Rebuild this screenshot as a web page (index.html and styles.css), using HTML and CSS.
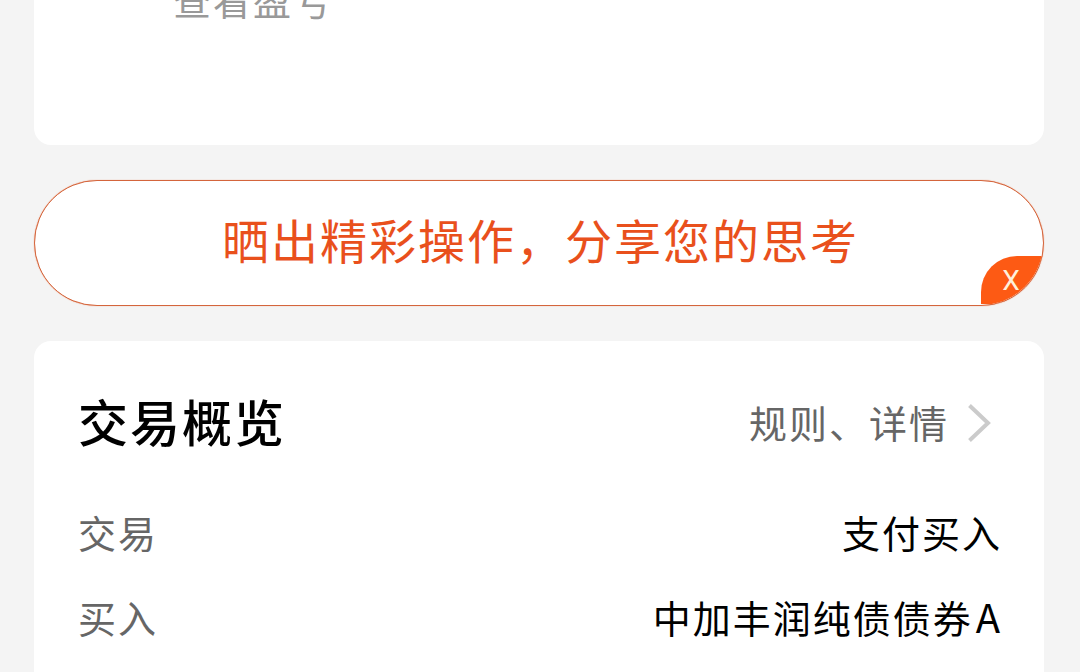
FILE: index.html
```html
<!DOCTYPE html>
<html lang="zh-CN">
<head>
    <meta charset="UTF-8">
    <meta name="viewport" content="width=device-width, initial-scale=1.0">
    <title>交易概览</title>
    <link rel="stylesheet" href="styles.css">
</head>
<body>
    <main class="page">
        <section class="card profit">
            <p class="profit-text">查看盈亏</p>
        </section>

        <section class="banner">
            <span class="banner-text">晒出精彩操作，分享您的思考</span>
            <button class="banner-close">
                <span>X</span>
            </button>
        </section>

        <section class="card overview">
            <header class="overview-head">
                <h2>交易概览</h2>
                <a class="more">
                    <span class="more-text">规则、详情</span>
                    <svg class="arrow" width="24" height="40" viewBox="0 0 24 40">
                        <path d="M1.5 2.5L20 20L1.5 37.5" fill="none" stroke="#cbcbcb" stroke-width="4"/>
                    </svg>
                </a>
            </header>
            <div class="row">
                <span class="label">交易</span>
                <span class="value">支付买入</span>
            </div>
            <div class="row">
                <span class="label">买入</span>
                <span class="value">中加丰润纯债债券<span class="latin">A</span></span>
            </div>
        </section>
    </main>
</body>
</html>
```
FILE: styles.css
```css
* {
    margin: 0;
    padding: 0;
    box-sizing: border-box;
}

body {
    height: 672px;
    overflow: hidden;
    background: #f4f4f4;
    font-family: "Noto Sans CJK SC", sans-serif;
    font-size: 38px;
    letter-spacing: 2px;
    color: #000;
}

.page {
    display: flex;
    flex-direction: column;
    gap: 35px;
    height: 672px;
    padding: 0 36px 0 34px;
    overflow: hidden;
}

.card {
    flex: none;
    background: #fff;
    border-radius: 17px;
}

.profit {
    height: 205px;
    margin-top: -60px;
    padding: 34px 139px 0;
}

.profit-text {
    line-height: 50px;
    color: #999;
}

.banner {
    position: relative;
    display: flex;
    flex: none;
    align-items: center;
    justify-content: center;
    height: 126px;
    border: 1px solid #d4653c;
    border-radius: 63px;
    background: #fff;
    box-shadow: 0 0 1px #e8835c;
    overflow: hidden;
}

.banner-text {
    padding: 0 0 8px 3px;
    font-size: 47px;
    line-height: 60px;
    color: #e9501c;
}

/* sits over the lower right corner, clipped by the pill */
.banner-close {
    position: absolute;
    right: 0;
    bottom: 1px;
    width: 62px;
    height: 48px;
    padding: 1px 2px 0 0;
    border: none;
    border-radius: 36px 0 0 0;
    background: #fd5a14;
    font-family: Roboto, sans-serif;
    font-size: 28px;
    font-weight: 400;
    line-height: 48px;
    color: #fff0dc;
}

.overview {
    height: 400px;
    padding: 46px 44px 0;
}

.overview-head {
    display: flex;
    align-items: center;
    justify-content: space-between;
    height: 68px;
    margin-bottom: 34px;
}

.overview-head h2 {
    padding-bottom: 2px;
    font-size: 50px;
    font-weight: 500;
    line-height: 68px;
}

.more {
    display: flex;
    align-items: center;
    gap: 18px;
    margin-right: 8px;
    color: #666;
}

.more-text {
    margin-right: 1px;
}

.arrow {
    position: relative;
    top: 2px;
}

.row {
    display: flex;
    align-items: center;
    justify-content: space-between;
    height: 85px;
    line-height: 50px;
}

.label {
    color: #666;
}

.value {
    margin-right: -2px;
}

.latin {
    margin-left: 3px;
    font-size: 40px;
}
```
